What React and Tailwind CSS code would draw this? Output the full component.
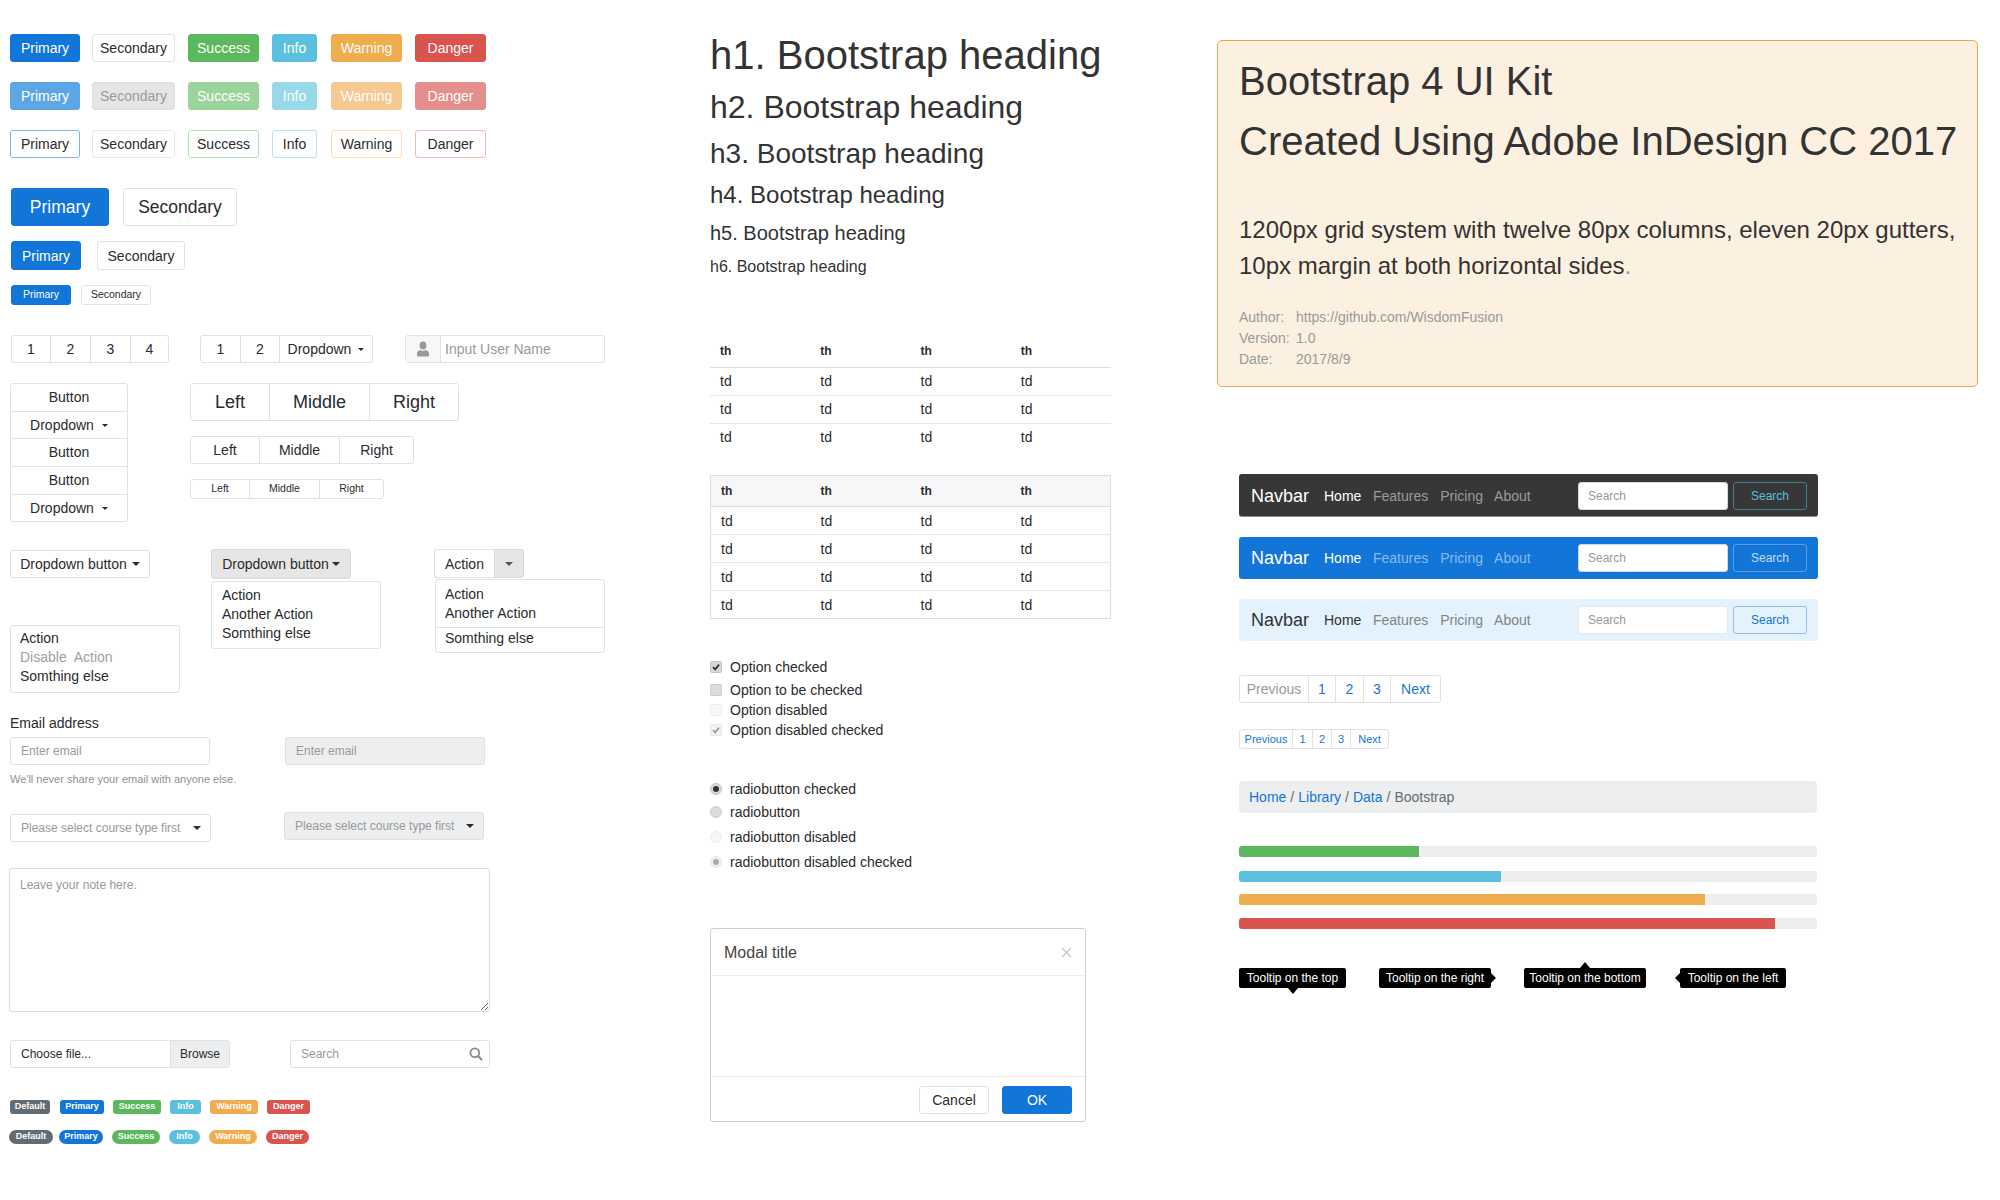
import React from "react";

const solid = {
  primary: "bg-[#1275d8] border-[#1275d8] text-white",
  secondary: "bg-white border-[#e2e2e2] text-[#292b2c]",
  success: "bg-[#5cb85c] border-[#5cb85c] text-white",
  info: "bg-[#5bc0de] border-[#5bc0de] text-white",
  warning: "bg-[#f0ad4e] border-[#f0ad4e] text-white",
  danger: "bg-[#d9534f] border-[#d9534f] text-white",
};

const disabled = {
  primary: "bg-[#5da6e6] border-[#5da6e6] text-white",
  secondary: "bg-[#e5e5e5] border-[#dddddd] text-[#9a9a9a]",
  success: "bg-[#9bd49b] border-[#9bd49b] text-white",
  info: "bg-[#98d8ea] border-[#98d8ea] text-white",
  warning: "bg-[#f6c991] border-[#f6c991] text-white",
  danger: "bg-[#e48f8c] border-[#e48f8c] text-white",
};

const outline = {
  primary: "bg-white border-[#7fb5ea] text-[#292b2c]",
  secondary: "bg-white border-[#e8e8e8] text-[#292b2c]",
  success: "bg-white border-[#b3e0b3] text-[#292b2c]",
  info: "bg-white border-[#b5e3f0] text-[#292b2c]",
  warning: "bg-white border-[#f9dcb5] text-[#292b2c]",
  danger: "bg-white border-[#f0b8b6] text-[#292b2c]",
};

const mainButtons = [
  ["primary", "Primary", "w-[70px]"],
  ["secondary", "Secondary", "w-[83px] ml-3"],
  ["success", "Success", "w-[71px] ml-[13px]"],
  ["info", "Info", "w-[45px] ml-[13px]"],
  ["warning", "Warning", "w-[71px] ml-[14px]"],
  ["danger", "Danger", "w-[71px] ml-[13px]"],
];

const Btn = ({ className = "", children }) => (
  <div className={`flex items-center justify-center border rounded-[3px] ${className}`}>{children}</div>
);

const Caret = ({ size = "small", color = "dark" }) => (
  <span
    className={`inline-block border-x-transparent ${
      size === "small" ? "border-x-[3px] border-t-[3px]" : "border-x-[4px] border-t-[4px]"
    } ${color === "dark" ? "border-t-[#292b2c]" : "border-t-[#555555]"}`}
  />
);

const ButtonRow = ({ styles, className }) => (
  <div className={`flex text-sm ${className}`}>
    {mainButtons.map(([key, label, size]) => (
      <Btn key={key} className={`h-7 ${size} ${styles[key]}`}>{label}</Btn>
    ))}
  </div>
);

const Group = ({ cells, className = "", height, text }) => (
  <div className={`flex bg-white border border-[#e2e2e2] rounded-[3px] text-[#292b2c] ${height} ${text} ${className}`}>
    {cells.map(([label, w], i) => (
      <div key={i} className={`flex items-center justify-center ${w} ${i > 0 ? "border-l border-[#e2e2e2]" : ""}`}>
        {label}
      </div>
    ))}
  </div>
);

const MenuBox = ({ className = "", children }) => (
  <div className={`bg-white border border-[#e2e2e2] rounded-[3px] text-sm leading-[19px] text-[#292b2c] ${className}`}>
    {children}
  </div>
);

const verticalRows = [
  ["Button", "h-[27px] pb-[2px]"],
  ["Dropdown", "h-[27px]"],
  ["Button", "h-7 pb-[2px]"],
  ["Button", "h-7 pb-[2px]"],
  ["Dropdown", "h-[27px]"],
];

const LeftColumn = () => (
  <div className="w-[710px] pl-[10px] pt-[34px] shrink-0">
    <ButtonRow styles={solid} />
    <ButtonRow styles={disabled} className="mt-5" />
    <ButtonRow styles={outline} className="mt-5" />

    <div className="flex items-center mt-[30px] ml-px">
      <Btn className={`w-[98px] h-[38px] text-[17.5px] ${solid.primary}`}>Primary</Btn>
      <Btn className={`w-[114px] h-[38px] ml-[14px] text-[17.5px] ${solid.secondary}`}>Secondary</Btn>
    </div>
    <div className="flex items-center mt-[15px] ml-px text-sm">
      <Btn className={`w-[70px] h-[29px] ${solid.primary}`}>Primary</Btn>
      <Btn className={`w-[88px] h-[29px] ml-4 ${solid.secondary}`}>Secondary</Btn>
    </div>
    <div className="flex items-center mt-[15px] ml-px text-[10.5px]">
      <Btn className={`w-[60px] h-5 ${solid.primary}`}>Primary</Btn>
      <Btn className={`w-[70px] h-5 ml-[10px] ${solid.secondary}`}>Secondary</Btn>
    </div>

    <div className="flex mt-[30px] ml-px text-sm">
      <Group
        height="h-7"
        cells={[["1", "w-[38px]"], ["2", "w-10"], ["3", "w-10"], ["4", "w-[38px]"]]}
      />
      <div className="flex h-7 ml-[31px] bg-white border border-[#e2e2e2] rounded-[3px] text-[#292b2c]">
        <div className="flex items-center justify-center w-[39px]">1</div>
        <div className="flex items-center justify-center w-[39px] border-l border-[#e2e2e2]">2</div>
        <div className="flex items-center justify-center gap-[7px] w-[93px] border-l border-[#e2e2e2]">
          Dropdown <Caret />
        </div>
      </div>
      <div className="flex h-7 w-[200px] ml-[32px] border border-[#e2e2e2] rounded-[3px]">
        <div className="flex items-center justify-center w-[35px] bg-[#f7f7f7] border-r border-[#e2e2e2]">
          <svg width="12" height="16" viewBox="0 0 12 16" fill="#999999">
            <ellipse cx="6" cy="4.5" rx="3.4" ry="4" />
            <path d="M1 15.5c-.6 0-1-.4-1-1v-2.2c0-1.6 1.6-2.6 3.6-3.2.7.6 1.5 1 2.4 1s1.7-.4 2.4-1c2 .6 3.6 1.6 3.6 3.2v2.2c0 .6-.4 1-1 1z" />
          </svg>
        </div>
        <input placeholder="Input User Name" className="w-[160px] pl-1 text-sm bg-white outline-none placeholder:text-[#999999]" />
      </div>
    </div>

    <div className="flex mt-5">
      <div className="flex flex-col w-[118px] bg-white border border-[#e2e2e2] rounded-[3px] text-sm text-[#292b2c]">
        {verticalRows.map(([label, h], i) => (
          <div
            key={i}
            className={`flex items-center justify-center gap-2 ${h} ${i > 0 ? "border-t border-[#e2e2e2]" : ""}`}
          >
            {label}
            {label === "Dropdown" && <Caret />}
          </div>
        ))}
      </div>
      <div className="ml-[62px]">
        <Group
          height="h-[38px]"
          text="text-lg"
          className="w-[269px]"
          cells={[["Left", "w-[78px]"], ["Middle", "w-[100px]"], ["Right", "w-[89px]"]]}
        />
        <Group
          height="h-7"
          text="text-sm"
          className="w-[224px] mt-[15px]"
          cells={[["Left", "w-[68px]"], ["Middle", "w-20"], ["Right", "w-[74px]"]]}
        />
        <Group
          height="h-5"
          text="text-[10.5px]"
          className="w-[194px] mt-[15px]"
          cells={[["Left", "w-[58px]"], ["Middle", "w-[70px]"], ["Right", "w-16"]]}
        />
      </div>
    </div>

    <div className="flex mt-[27px]">
      <div className="w-[201px]">
        <div className="flex items-center justify-center gap-[5px] w-[140px] h-7 mt-px bg-white border border-[#e2e2e2] rounded-[3px] text-sm text-[#292b2c]">
          Dropdown button <Caret size="big" />
        </div>
        <MenuBox className="w-[170px] h-[68px] mt-[47px] px-[9px] pt-[3px]">
          <div>Action</div>
          <div className="text-[#a0a0a0]">Disable&nbsp; Action</div>
          <div>Somthing else</div>
        </MenuBox>
      </div>
      <div className="w-[223px]">
        <div className="flex items-center justify-center gap-[3px] w-[140px] h-[30px] bg-[#e6e6e6] border border-[#dadada] rounded-[3px] text-sm text-[#292b2c]">
          Dropdown button <Caret size="big" />
        </div>
        <MenuBox className="w-[170px] h-[68px] mt-[2px] px-[10px] pt-[4px]">
          <div>Action</div>
          <div>Another Action</div>
          <div>Somthing else</div>
        </MenuBox>
      </div>
      <div>
        <div className="flex h-[29px] w-[90px] text-sm text-[#292b2c]">
          <div className="flex items-center justify-center w-[60px] bg-white border border-r-0 border-[#e2e2e2] rounded-l-[3px]">
            Action
          </div>
          <div className="flex items-center justify-center w-[30px] bg-[#e6e6e6] border border-[#dadada] rounded-r-[3px]">
            <Caret size="big" color="gray" />
          </div>
        </div>
        <MenuBox className="w-[170px] h-[74px] mt-px ml-px">
          <div className="px-[9px] pt-[5px] pb-[4px] border-b border-[#e2e2e2]">
            <div>Action</div>
            <div>Another Action</div>
          </div>
          <div className="px-[9px] pt-px">Somthing else</div>
        </MenuBox>
      </div>
    </div>

    <div className="mt-5 text-sm leading-5 text-[#292b2c]">Email address</div>
    <div className="flex mt-1">
      <div className="w-[275px]">
        <input
          placeholder="Enter email"
          className="block w-[200px] h-7 px-[10px] border border-[#e2e2e2] rounded-[3px] text-xs outline-none placeholder:text-[#999999]"
        />
        <div className="mt-[6px] text-[11px] leading-4 text-[#8d9296]">We'll never share your email with anyone else.</div>
      </div>
      <input
        disabled
        placeholder="Enter email"
        className="block w-[200px] h-7 px-[10px] bg-[#eceeef] border border-[#dfe0e1] rounded-[3px] text-xs outline-none placeholder:text-[#999999]"
      />
    </div>

    <div className="flex items-start mt-[25px] text-xs text-[#999999]">
      <div className="flex items-center justify-between w-[201px] h-7 mt-[2px] pl-[10px] pr-[9px] bg-white border border-[#e2e2e2] rounded-[3px]">
        Please select course type first <Caret size="big" />
      </div>
      <div className="flex items-center justify-between w-[200px] h-7 ml-[73px] pl-[10px] pr-[9px] bg-[#eceeef] border border-[#dfe0e1] rounded-[3px]">
        Please select course type first <Caret size="big" />
      </div>
    </div>

    <textarea
      placeholder="Leave your note here."
      className="block w-[481px] h-[144px] mt-[26px] -ml-px px-[10px] py-[8px] border border-[#dddddd] rounded-[3px] text-xs outline-none placeholder:text-[#999999]"
    />

    <div className="flex mt-7 text-xs">
      <div className="flex w-[220px] h-7 border border-[#e2e2e2] rounded-[3px] text-[#292b2c]">
        <div className="flex items-center flex-1 pl-[10px]">Choose file...</div>
        <div className="flex items-center justify-center w-[59px] bg-[#eceeef] border-l border-[#dfe0e1]">Browse</div>
      </div>
      <div className="flex items-center justify-between w-[200px] h-7 ml-[60px] pl-[10px] pr-[6px] border border-[#e2e2e2] rounded-[3px] text-[#999999]">
        Search
        <svg width="14" height="14" viewBox="0 0 14 14" fill="none" stroke="#8a8a8a" strokeWidth="1.8">
          <circle cx="5.8" cy="5.8" r="4.4" />
          <path d="M9 9l4 4" strokeWidth="2.2" />
        </svg>
      </div>
    </div>

    <Badges rounded="rounded-[3px]" first="w-10" className="mt-8" />
    <Badges rounded="rounded-[7px]" first="w-11" className="mt-4 -ml-px" />
  </div>
);

const Badges = ({ rounded, first, className }) => (
  <div className={`flex text-[9px] font-bold text-white ${className}`}>
    {[
      ["Default", `bg-[#636c72] ${first}`],
      ["Primary", `bg-[#1275d8] w-11 ${first === "w-11" ? "ml-[6px]" : "ml-[10px]"}`],
      ["Success", "bg-[#5cb85c] w-12 ml-[9px]"],
      ["Info", "bg-[#5bc0de] w-[31px] ml-[9px]"],
      ["Warning", "bg-[#f0ad4e] w-12 ml-[9px]"],
      ["Danger", "bg-[#d9534f] w-[43px] ml-[9px]"],
    ].map(([label, cls]) => (
      <div key={label} className={`flex items-center justify-center h-[14px] ${rounded} ${cls}`}>{label}</div>
    ))}
  </div>
);

const cols = ["c1", "c2", "c3", "c4"];

const DataTable = ({ rows, bordered, className }) => (
  <table className={`w-[401px] table-fixed border-collapse text-[#292b2c] ${bordered ? "border border-[#dddddd]" : ""} ${className}`}>
    <thead className={bordered ? "bg-[#f7f7f9]" : ""}>
      <tr className="h-[31px] border-b border-[#dddddd]">
        {cols.map((c) => (
          <th key={c} className="pl-[10px] text-left text-xs font-bold">th</th>
        ))}
      </tr>
    </thead>
    <tbody>
      {Array.from({ length: rows }, (_, r) => (
        <tr key={r} className={`h-7 ${r < rows - 1 ? "border-b border-[#e6e6e6]" : ""}`}>
          {cols.map((c) => (
            <td key={c} className="pl-[10px] text-sm">td</td>
          ))}
        </tr>
      ))}
    </tbody>
  </table>
);

const Tick = ({ color }) => (
  <svg width="8" height="8" viewBox="0 0 8 8" fill="none" stroke={color} strokeWidth="1.7">
    <path d="M1 4.2l2.2 2.2L7 1.6" />
  </svg>
);

const checks = [
  ["Option checked", "h-5 mt-[38px]", "bg-[#d8d8d8] border-[#c4c4c4]", "#333333"],
  ["Option to be checked", "h-5 mt-[3px]", "bg-[#dddddd] border-[#cccccc]", null],
  ["Option disabled", "h-5", "bg-[#f7f7f7] border-[#eeeeee]", null],
  ["Option disabled checked", "h-5", "bg-[#f3f3f3] border-[#e6e6e6]", "#9a9a9a"],
];

const radios = [
  ["radiobutton checked", "mt-[39px]", "bg-[#d8d8d8] border-[#c4c4c4]", "bg-[#333333]"],
  ["radiobutton", "mt-[3px]", "bg-[#dddddd] border-[#cccccc]", null],
  ["radiobutton disabled", "mt-[5px]", "bg-[#f7f7f7] border-[#eeeeee]", null],
  ["radiobutton disabled checked", "mt-[5px]", "bg-[#f3f3f3] border-[#e6e6e6]", "bg-[#aaaaaa]"],
];

const MiddleColumn = () => (
  <div className="w-[507px] pt-[33px] shrink-0 text-[#333333]">
    <h1 className="text-[40px] leading-[44px]">h1. Bootstrap heading</h1>
    <h2 className="mt-3 text-[32px] leading-9">h2. Bootstrap heading</h2>
    <h3 className="mt-[13px] text-[28px] leading-8">h3. Bootstrap heading</h3>
    <h4 className="mt-[11px] text-2xl leading-7">h4. Bootstrap heading</h4>
    <h5 className="mt-3 text-xl leading-6">h5. Bootstrap heading</h5>
    <h6 className="mt-3 text-base leading-5">h6. Bootstrap heading</h6>

    <DataTable rows={3} className="mt-[59px]" />
    <DataTable rows={4} bordered className="mt-6" />

    {checks.map(([label, row, box, tick]) => (
      <div key={label} className={`flex items-center text-sm text-[#292b2c] ${row}`}>
        <span className={`flex items-center justify-center w-3 h-3 mr-2 border rounded-[2px] ${box}`}>
          {tick && <Tick color={tick} />}
        </span>
        {label}
      </div>
    ))}

    {radios.map(([label, row, box, dot]) => (
      <div key={label} className={`flex items-center h-5 text-sm text-[#292b2c] ${row}`}>
        <span className={`flex items-center justify-center w-3 h-3 mr-2 border rounded-full ${box}`}>
          {dot && <span className={`w-[6px] h-[6px] rounded-full ${dot}`} />}
        </span>
        {label}
      </div>
    ))}

    <div className="flex flex-col w-[376px] h-[194px] mt-[56px] bg-white border border-[#cfcfcf] rounded-[3px]">
      <div className="flex items-center justify-between h-[47px] pl-[13px] pr-[13px] pt-px border-b border-[#eeeeee]">
        <span className="text-base text-[#444444]">Modal title</span>
        <svg width="11" height="11" viewBox="0 0 11 11" stroke="#c4c4c4" strokeWidth="1.2">
          <path d="M1 1l9 9M10 1l-9 9" />
        </svg>
      </div>
      <div className="flex-1" />
      <div className="flex items-center justify-end h-[45px] pr-[13px] pt-[2px] border-t border-[#eeeeee] text-sm">
        <Btn className={`w-[70px] h-7 ${solid.secondary}`}>Cancel</Btn>
        <Btn className={`w-[70px] h-7 ml-[13px] ${solid.primary}`}>OK</Btn>
      </div>
    </div>
  </div>
);

const navbars = [
  {
    bar: "h-[43px] pt-px bg-[#373737] border-b border-[#8a8a8a]",
    brand: "text-white",
    home: "text-white",
    link: "text-[#9b9b9b]",
    btn: "border-[#3b7f92] text-[#5bc0de]",
    input: "border-[#d6d6d6]",
  },
  {
    bar: "h-[42px] mt-5 bg-[#1275d8]",
    brand: "text-white",
    home: "text-white",
    link: "text-[#88bbec]",
    btn: "border-[#5d9ee3] text-[#c3dcf5]",
    input: "border-[#d6d6d6]",
  },
  {
    bar: "h-[42px] mt-5 bg-[#e3f2fd]",
    brand: "text-[#333333]",
    home: "text-[#333333]",
    link: "text-[#7f8488]",
    btn: "border-[#8fbcec] text-[#1275d8]",
    input: "border-[#e4e8eb]",
  },
];

const Navbar = ({ bar, brand, home, link, btn, input }) => (
  <div className={`flex items-center w-[579px] pl-[12px] pr-[11px] rounded-[3px] text-sm ${bar}`}>
    <span className={`w-[58px] text-lg ${brand}`}>Navbar</span>
    <span className={`ml-[15px] w-[37px] ${home}`}>Home</span>
    <span className={`ml-3 ${link}`}>Features</span>
    <span className={`ml-3 ${link}`}>Pricing</span>
    <span className={`ml-[11px] ${link}`}>About</span>
    <input
      placeholder="Search"
      className={`ml-auto w-[150px] h-7 px-[9px] bg-white border rounded-[3px] text-xs outline-none placeholder:text-[#999999] ${input}`}
    />
    <Btn className={`w-[74px] h-7 ml-[5px] text-xs ${btn}`}>Search</Btn>
  </div>
);

const Pager = ({ cells, text, height, className }) => (
  <div className={`flex w-fit bg-white border border-[#e2e2e2] rounded-[3px] ${text} ${height} ${className}`}>
    {cells.map(([label, w, color], i) => (
      <div key={i} className={`flex items-center justify-center ${w} ${color} ${i > 0 ? "border-l border-[#e2e2e2]" : ""}`}>
        {label}
      </div>
    ))}
  </div>
);

const bars = [
  ["bg-[#5cb85c]", 180, "mt-[33px]"],
  ["bg-[#5bc0de]", 262, "mt-[14px]"],
  ["bg-[#f0ad4e]", 466, "mt-3"],
  ["bg-[#d9534f]", 536, "mt-[13px]"],
];

const RightColumn = () => (
  <div className="pt-10 flex-1">
    <div className="w-[761px] h-[347px] pl-[21px] pt-[10px] bg-[#fcf0e0] border border-[#f0a44a] rounded-[5px] text-[#333333]">
      <div className="text-[40px] leading-[60px]">Bootstrap 4 UI Kit</div>
      <div className="text-[40px] leading-[60px]">Created Using Adobe InDesign CC 2017</div>
      <div className="mt-[41px] text-2xl leading-9">
        1200px grid system with twelve 80px columns, eleven 20px gutters,
        <br />
        10px margin at both horizontal sides<span className="text-[#999999]">.</span>
      </div>
      <div className="grid grid-cols-[57px_1fr] mt-[23px] text-sm leading-[21px] text-[#999999]">
        <span>Author:</span>
        <span>https://github.com/WisdomFusion</span>
        <span>Version:</span>
        <span>1.0</span>
        <span>Date:</span>
        <span>2017/8/9</span>
      </div>
    </div>

    <div className="ml-[22px]">
      <div className="h-[87px]" />
      {navbars.map((n, i) => (
        <Navbar key={i} {...n} />
      ))}

      <Pager
        className="mt-[34px]"
        text="text-sm"
        height="h-7"
        cells={[
          ["Previous", "w-[68px]", "text-[#999999]"],
          ["1", "w-[27px]", "text-[#1275d8]"],
          ["2", "w-[28px]", "text-[#1275d8]"],
          ["3", "w-[27px]", "text-[#1275d8]"],
          ["Next", "w-[50px]", "text-[#1275d8]"],
        ]}
      />
      <Pager
        className="mt-[26px]"
        text="text-[11px]"
        height="h-5"
        cells={[
          ["Previous", "w-[52px]", "text-[#1275d8]"],
          ["1", "w-5", "text-[#1275d8]"],
          ["2", "w-[19px]", "text-[#1275d8]"],
          ["3", "w-[19px]", "text-[#1275d8]"],
          ["Next", "w-[38px]", "text-[#1275d8]"],
        ]}
      />

      <div className="flex items-center w-[578px] h-8 mt-8 pl-[10px] bg-[#eceeef] rounded-[4px] text-sm text-[#636c72]">
        <span className="text-[#1275d8]">Home</span>
        <span className="mx-1">/</span>
        <span className="text-[#1275d8]">Library</span>
        <span className="mx-1">/</span>
        <span className="text-[#1275d8]">Data</span>
        <span className="mx-1">/</span>
        Bootstrap
      </div>

      {bars.map(([color, width, gap]) => (
        <div key={color} className={`w-[578px] h-[11px] bg-[#eceeef] rounded-[3px] overflow-hidden ${gap}`}>
          <div className={`h-full ${color}`} style={{ width }} />
        </div>
      ))}

      <div className="flex mt-[39px] text-xs text-white">
        <div className="relative flex items-center justify-center w-[107px] h-5 bg-black rounded-[2px]">
          Tooltip on the top
          <span className="absolute left-1/2 -translate-x-1/2 top-full border-x-[5px] border-t-[6px] border-x-transparent border-t-black" />
        </div>
        <div className="relative flex items-center justify-center w-[112px] h-5 ml-[33px] bg-black rounded-[2px]">
          Tooltip on the right
          <span className="absolute left-full top-1/2 -translate-y-1/2 border-y-[5px] border-l-[5px] border-y-transparent border-l-black" />
        </div>
        <div className="relative flex items-center justify-center w-[122px] h-5 ml-[33px] bg-black rounded-[2px]">
          Tooltip on the bottom
          <span className="absolute left-1/2 -translate-x-1/2 bottom-full border-x-[5px] border-b-[6px] border-x-transparent border-b-black" />
        </div>
        <div className="relative flex items-center justify-center w-[106px] h-5 ml-[34px] bg-black rounded-[2px]">
          Tooltip on the left
          <span className="absolute right-full top-1/2 -translate-y-1/2 border-y-[5px] border-r-[5px] border-y-transparent border-r-black" />
        </div>
      </div>
    </div>
  </div>
);

export default function App() {
  return (
    <div className="flex w-[2000px] h-[1200px] bg-white overflow-hidden font-['Liberation_Sans',Arial,sans-serif]">
      <LeftColumn />
      <MiddleColumn />
      <RightColumn />
    </div>
  );
}
